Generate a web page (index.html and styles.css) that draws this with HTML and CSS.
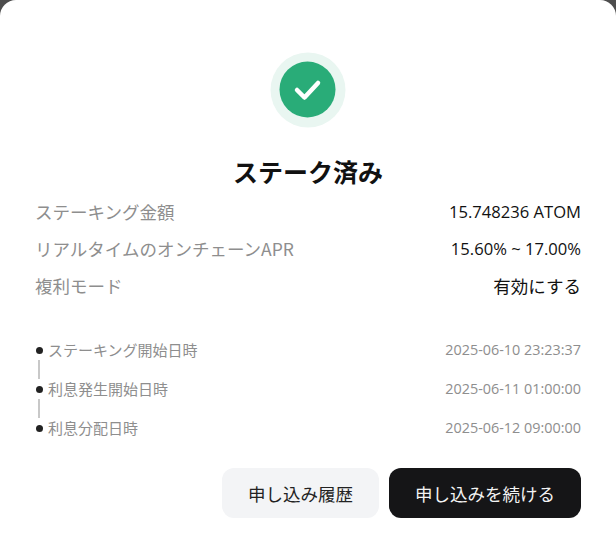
FILE: index.html
```html
<!DOCTYPE html>
<html>
<head>
  <title>ステーク済み</title>
  <meta charset="utf-8">
  <meta name="viewport" content="width=device-width, initial-scale=1.0">
  <link rel="stylesheet" href="styles.css">
</head>
<body>
  <div class="modal">
    <div class="status-icon">
      <svg width="76" height="76" viewBox="0 0 76 76">
        <circle cx="38" cy="38" r="37.5" fill="#e9f6f1"/>
        <circle cx="37.5" cy="37.5" r="28" fill="#29ac78"/>
        <path d="M27 38L34.5 45.5L48 31" fill="none" stroke="#fff" stroke-width="4.5" stroke-linecap="round" stroke-linejoin="round"/>
      </svg>
    </div>
    <h1 class="title">ステーク済み</h1>

    <div class="info-list">
      <div class="info-row">
        <span class="label">ステーキング金額</span>
        <span class="value">15.748236 ATOM</span>
      </div>
      <div class="info-row">
        <span class="label">リアルタイムのオンチェーンAPR</span>
        <span class="value">15.60% ~ 17.00%</span>
      </div>
      <div class="info-row">
        <span class="label">複利モード</span>
        <span class="value-cjk">有効にする</span>
      </div>
    </div>

    <div class="timeline">
      <div class="step">
        <span class="step-name"><i class="dot"></i>ステーキング開始日時</span>
        <span class="step-date">2025-06-10 23:23:37</span>
      </div>
      <div class="step-line"></div>
      <div class="step">
        <span class="step-name"><i class="dot"></i>利息発生開始日時</span>
        <span class="step-date">2025-06-11 01:00:00</span>
      </div>
      <div class="step-line"></div>
      <div class="step">
        <span class="step-name"><i class="dot"></i>利息分配日時</span>
        <span class="step-date">2025-06-12 09:00:00</span>
      </div>
    </div>

    <div class="actions">
      <button class="button button-light">申し込み履歴</button>
      <button class="button button-dark">申し込みを続ける</button>
    </div>
  </div>
</body>
</html>
```

FILE: styles.css
```css
html, body {
  height: 100%;
}
body {
  margin: 0;
  background-color: #4d4d4d;
  font-family: "Noto Sans CJK JP", sans-serif;
}
.modal {
  box-sizing: border-box;
  height: 552px;
  padding: 52px 35px 0 35px;
  background: white;
  border-radius: 16px 16px 0 0;
}
.status-icon {
  display: flex;
  justify-content: center;
  height: 76px;
}
.title {
  margin: 23px 0 0 0;
  height: 40px;
  font-size: 25px;
  line-height: 40px;
  font-weight: 700;
  color: #111;
  text-align: center;
}
.info-list {
  margin-top: 2px;
}
.info-row {
  display: flex;
  justify-content: space-between;
  height: 37px;
  font-size: 17.5px;
  line-height: 37px;
}
.label {
  color: #8e8e8e;
}
.value {
  font-family: "Open Sans", "Noto Sans CJK JP", sans-serif;
  font-size: 16.6px;
  color: #111;
}
.value-cjk {
  color: #111;
}
.timeline {
  margin-top: 36px;
  padding-left: 1px;
}
.step {
  display: flex;
  justify-content: space-between;
  height: 20px;
  line-height: 20px;
  font-size: 15px;
  color: #8e8e8e;
}
.step-name {
  display: flex;
  align-items: center;
}
.step-date {
  font-family: "Open Sans", sans-serif;
  font-size: 14.4px;
}
.dot {
  width: 7px;
  height: 7px;
  margin-right: 5px;
  border-radius: 50%;
  background-color: #222;
}
.step-line {
  width: 2px;
  height: 19px;
  margin-left: 2px;
  background-color: #c8c8c8;
}
.actions {
  display: flex;
  justify-content: flex-end;
  gap: 10px;
  margin-top: 30px;
}
.button {
  height: 50px;
  border: none;
  border-radius: 12px;
  font-family: inherit;
  font-size: 17.5px;
  cursor: pointer;
}
.button-light {
  width: 157px;
  background-color: #f3f4f6;
  color: #222;
}
.button-dark {
  width: 192px;
  background-color: #151517;
  color: #f3f3f3;
}
```
